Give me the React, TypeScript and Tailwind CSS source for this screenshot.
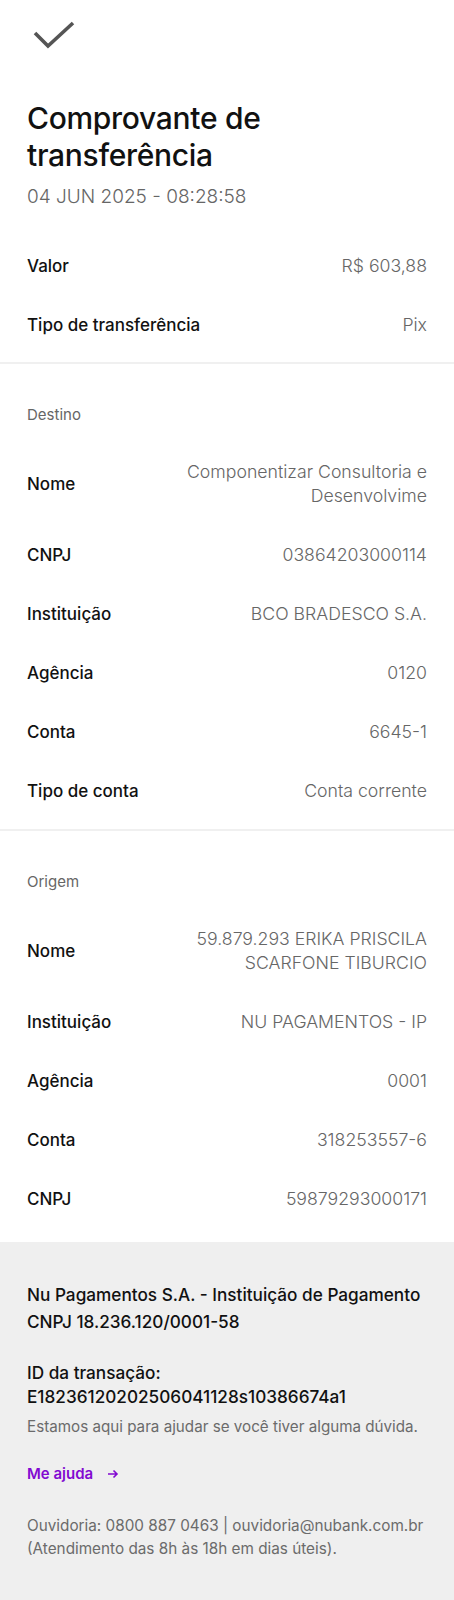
import React from 'react';

type Row = { label: string; value: string };

const topRows: Row[] = [
  { label: 'Valor', value: 'R$ 603,88' },
  { label: 'Tipo de transferência', value: 'Pix' },
];

const destino: Row[] = [
  { label: 'Nome', value: 'Componentizar Consultoria e Desenvolvime' },
  { label: 'CNPJ', value: '03864203000114' },
  { label: 'Instituição', value: 'BCO BRADESCO S.A.' },
  { label: 'Agência', value: '0120' },
  { label: 'Conta', value: '6645-1' },
  { label: 'Tipo de conta', value: 'Conta corrente' },
];

const origem: Row[] = [
  { label: 'Nome', value: '59.879.293 ERIKA PRISCILA SCARFONE TIBURCIO' },
  { label: 'Instituição', value: 'NU PAGAMENTOS - IP' },
  { label: 'Agência', value: '0001' },
  { label: 'Conta', value: '318253557-6' },
  { label: 'CNPJ', value: '59879293000171' },
];

const InfoRow = ({ label, value }: Row) => (
  <div className="flex items-center justify-between gap-4 py-[17.5px]">
    <span className="shrink-0 text-[17px] leading-[24px] font-medium text-[#111]">{label}</span>
    <span className="max-w-[250px] text-right text-[17.7px] leading-[24px] font-light text-[#666]">{value}</span>
  </div>
);

const Divider = () => <div className="h-[2px] bg-[#f0f0f0]" />;

export default function App() {
  return (
    <div className="min-h-screen bg-white font-['Inter','Noto_Sans',sans-serif] antialiased">
      {/* header */}
      <div className="px-[27px] pt-[20px]">
        <svg width="42" height="30" viewBox="0 0 42 30" className="ml-[6px] block">
          <polyline points="2,13 15,26 40,3" fill="none" stroke="#555" strokeWidth="3.6" />
        </svg>
        <h1 className="mt-[50px] text-[30px] leading-[37px] font-medium tracking-[-0.3px] text-[#111]">
          Comprovante de
          <br />
          transferência
        </h1>
        <p className="mt-[9px] text-[19px] leading-[28px] font-light text-[#666]">04 JUN 2025 - 08:28:58</p>
      </div>

      <div className="mt-[25px] px-[27px] pb-[8px]">
        {topRows.map((r) => (
          <InfoRow key={r.label} {...r} />
        ))}
      </div>
      <Divider />

      <div className="px-[27px] pt-[41px] pb-[9px]">
        <p className="mb-[17px] text-[15px] leading-[20px] text-[#666]">Destino</p>
        {destino.map((r) => (
          <InfoRow key={r.label} {...r} />
        ))}
      </div>
      <Divider />

      <div className="px-[27px] pt-[41px] pb-[14px]">
        <p className="mb-[17px] text-[15px] leading-[20px] text-[#666]">Origem</p>
        {origem.map((r) => (
          <InfoRow key={r.label + r.value} {...r} />
        ))}
      </div>

      {/* footer */}
      <div className="bg-[#efefef] px-[27px] pt-[39px] pb-[40px]">
        <p className="text-[17.2px] leading-[27px] font-medium text-[#111]">
          Nu Pagamentos S.A. - Instituição de Pagamento
          <br />
          CNPJ 18.236.120/0001-58
        </p>
        <p className="mt-[26px] text-[17.2px] leading-[24px] font-medium text-[#111]">
          ID da transação:
          <br />
          E18236120202506041128s10386674a1
        </p>
        <p className="mt-[7px] text-[15.2px] leading-[22px] text-[#6b6b6b]">
          Estamos aqui para ajudar se você tiver alguma dúvida.
        </p>
        <a href="#" className="mt-[25px] flex items-center gap-[14px] text-[15px] leading-[22px] font-semibold text-[#820ad1]">
          Me ajuda
          <svg width="12" height="12" viewBox="0 0 12 12">
            <path d="M1 6h9M6.5 2.5 10 6l-3.5 3.5" fill="none" stroke="#820ad1" strokeWidth="1.6" />
          </svg>
        </a>
        <p className="mt-[29px] text-[15.3px] leading-[23px] text-[#6b6b6b]">
          Ouvidoria: 0800 887 0463 | ouvidoria@nubank.com.br
          <br />
          (Atendimento das 8h às 18h em dias úteis).
        </p>
      </div>
    </div>
  );
}
